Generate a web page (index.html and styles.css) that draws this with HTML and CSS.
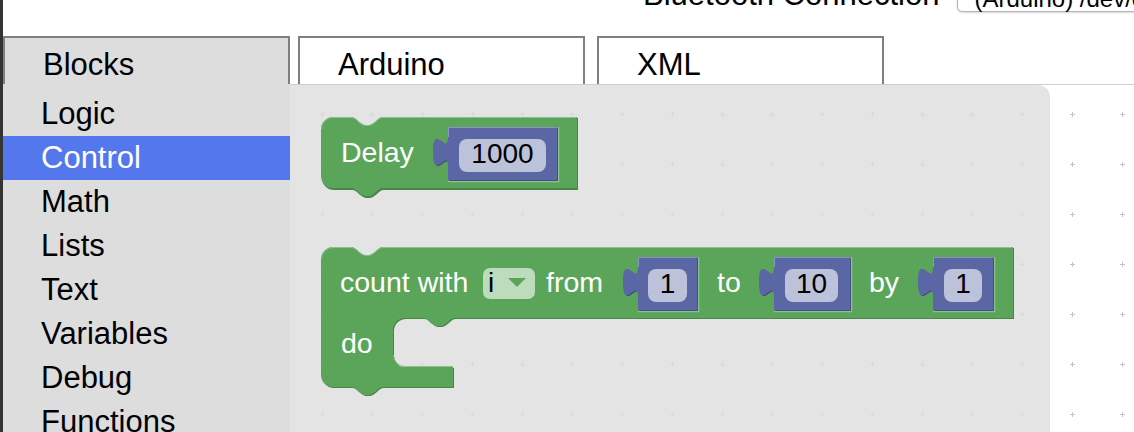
FILE: index.html
```html
<!DOCTYPE html>
<html>
<head>
<meta charset="utf-8">
<title>Blocks</title>
<link rel="stylesheet" href="styles.css">
</head>
<body>
<div class="app">
  <div class="edge"></div>
  <div class="main">
    <header class="topbar">
      <span class="bt-label">Bluetooth Connection</span>
      <div class="port-select">(Arduino) /dev/cu.usbmodem1411</div>
    </header>
    <nav class="tabs">
      <div class="tab tab-active">Blocks</div>
      <div class="tab tab-code">Arduino</div>
      <div class="tab">XML</div>
    </nav>
    <div class="editor">
      <ul class="toolbox">
        <li class="toolbox-item">Logic</li>
        <li class="toolbox-item selected">Control</li>
        <li class="toolbox-item">Math</li>
        <li class="toolbox-item">Lists</li>
        <li class="toolbox-item">Text</li>
        <li class="toolbox-item">Variables</li>
        <li class="toolbox-item">Debug</li>
        <li class="toolbox-item">Functions</li>
      </ul>
      <div class="workspace">
        <svg class="canvas" width="844" height="347" viewBox="0 0 844 347" xmlns="http://www.w3.org/2000/svg">
          <defs>
            <pattern id="grid" patternUnits="userSpaceOnUse" width="50" height="50" x="0" y="0">
              <rect x="20" y="14" width="5" height="1" fill="#c4c4c4"/>
              <rect x="22" y="12" width="1" height="5" fill="#c4c4c4"/>
            </pattern>
          </defs>
          <g transform="translate(-290 -85)">
            <rect x="290" y="85" width="844" height="347" fill="url(#grid)"/>
            <path class="flyout" d="M290,85 H1038 A12,12 0 0 1 1050,97 V432 H290 Z"/>

            <!-- Delay block -->
            <path class="g-dark" transform="translate(1 1)" d="M321,129 A12,12 0 0 1 333,117 H351 c3,0 5,2 7,4 l4,3 c2,1 3,1 5,1 c2,0 3,0 5,-1 l4,-3 c2,-2 4,-4 7,-4 H577 V189 H383 c-3,0 -5,2 -7,4 l-4,3 c-2,1 -3,1 -5,1 c-2,0 -3,0 -5,-1 l-4,-3 c-2,-2 -4,-4 -7,-4 H333 A12,12 0 0 1 321,177 Z"/>
            <path class="g-fill" d="M321,129 A12,12 0 0 1 333,117 H351 c3,0 5,2 7,4 l4,3 c2,1 3,1 5,1 c2,0 3,0 5,-1 l4,-3 c2,-2 4,-4 7,-4 H577 V188 H383 c-3,0 -5,2 -7,4 l-4,3 c-2,1 -3,1 -5,1 c-2,0 -3,0 -5,-1 l-4,-3 c-2,-2 -4,-4 -7,-4 H333 A12,12 0 0 1 321,176 Z"/>
            <path class="g-hi" d="M321.5,129 A11.5,11.5 0 0 1 333,117.5 H351 c3,0 5,2 7,4 l4,3 c2,1 3,1 5,1 c2,0 3,0 5,-1 l4,-3 c2,-2 4,-4 7,-4 H576"/>
            <text class="blk-label" x="341" y="162">Delay</text>

            <path class="sock-hi" d="M558.5,127 V181.5 H448"/>
            <path class="v-dark" transform="translate(1 1)" d="M448,127 H557 V180 H448 V167 C448,147 433,183 433,152 C433,121 448,157 448,137 Z"/>
            <path class="v-fill" d="M448,127 H557 V180 H448 V167 C448,147 433,183 433,152 C433,121 448,157 448,137 Z"/>
            <path class="v-hi" d="M448.5,137 V127.5 H556.5"/>
            <rect class="v-field" x="459" y="139" width="87" height="33" rx="8"/>
            <text class="fld-text" x="502.5" y="163">1000</text>

            <!-- count with block -->
            <path class="g-dark" transform="translate(1 1)" d="M321,259 A12,12 0 0 1 333,247 H351 c3,0 5,2 7,4 l4,3 c2,1 3,1 5,1 c2,0 3,0 5,-1 l4,-3 c2,-2 4,-4 7,-4 H1013 V318 H455 c-3,0 -5,2 -7,4 l-4,3 c-2,1 -3,1 -5,1 c-2,0 -3,0 -5,-1 l-4,-3 c-2,-2 -4,-4 -7,-4 H405 A12,12 0 0 0 393,330 V355 A12,12 0 0 0 405,367 H453 V387 H383 c-3,0 -5,2 -7,4 l-4,3 c-2,1 -3,1 -5,1 c-2,0 -3,0 -5,-1 l-4,-3 c-2,-2 -4,-4 -7,-4 H333 A12,12 0 0 1 321,375 Z"/>
            <path class="g-fill" d="M321,259 A12,12 0 0 1 333,247 H351 c3,0 5,2 7,4 l4,3 c2,1 3,1 5,1 c2,0 3,0 5,-1 l4,-3 c2,-2 4,-4 7,-4 H1013 V318 H455 c-3,0 -5,2 -7,4 l-4,3 c-2,1 -3,1 -5,1 c-2,0 -3,0 -5,-1 l-4,-3 c-2,-2 -4,-4 -7,-4 H405 A12,12 0 0 0 393,330 V355 A12,12 0 0 0 405,367 H453 V387 H383 c-3,0 -5,2 -7,4 l-4,3 c-2,1 -3,1 -5,1 c-2,0 -3,0 -5,-1 l-4,-3 c-2,-2 -4,-4 -7,-4 H333 A12,12 0 0 1 321,375 Z"/>
            <path class="g-hi" d="M321.5,259 A11.5,11.5 0 0 1 333,247.5 H351 c3,0 5,2 7,4 l4,3 c2,1 3,1 5,1 c2,0 3,0 5,-1 l4,-3 c2,-2 4,-4 7,-4 H1012"/>
            <path class="g-hi" d="M393.5,355 A11.5,11.5 0 0 0 405,366.5 H453"/>
            <text class="blk-label" x="340" y="292">count with</text>
            <rect class="g-field" x="483" y="268" width="52" height="31" rx="7"/>
            <text class="fld-text" x="491" y="292" text-anchor="start">i</text>
            <path class="dd-arrow" d="M508,278 H526 L517,287 Z"/>
            <text class="blk-label" x="546" y="292">from</text>

            <path class="sock-hi" d="M698.5,257 V311.5 H638"/>
            <path class="v-dark" transform="translate(1 1)" d="M638,257 H697 V310 H638 V297 C638,277 623,313 623,282 C623,251 638,287 638,267 Z"/>
            <path class="v-fill" d="M638,257 H697 V310 H638 V297 C638,277 623,313 623,282 C623,251 638,287 638,267 Z"/>
            <path class="v-hi" d="M638.5,267 V257.5 H696.5"/>
            <rect class="v-field" x="648" y="269" width="39" height="33" rx="8"/>
            <text class="fld-text" x="667.5" y="293">1</text>

            <text class="blk-label" x="717" y="292">to</text>

            <path class="sock-hi" d="M851.5,257 V311.5 H774"/>
            <path class="v-dark" transform="translate(1 1)" d="M774,257 H850 V310 H774 V297 C774,277 759,313 759,282 C759,251 774,287 774,267 Z"/>
            <path class="v-fill" d="M774,257 H850 V310 H774 V297 C774,277 759,313 759,282 C759,251 774,287 774,267 Z"/>
            <path class="v-hi" d="M774.5,267 V257.5 H849.5"/>
            <rect class="v-field" x="785" y="269" width="53" height="33" rx="8"/>
            <text class="fld-text" x="811.5" y="293">10</text>

            <text class="blk-label" x="869" y="292">by</text>

            <path class="sock-hi" d="M994.5,257 V311.5 H933"/>
            <path class="v-dark" transform="translate(1 1)" d="M933,257 H993 V310 H933 V297 C933,277 918,313 918,282 C918,251 933,287 933,267 Z"/>
            <path class="v-fill" d="M933,257 H993 V310 H933 V297 C933,277 918,313 918,282 C918,251 933,287 933,267 Z"/>
            <path class="v-hi" d="M933.5,267 V257.5 H992.5"/>
            <rect class="v-field" x="944" y="269" width="38" height="33" rx="8"/>
            <text class="fld-text" x="963" y="293">1</text>

            <text class="blk-label" x="341" y="353">do</text>
          </g>
        </svg>
      </div>
    </div>
  </div>
</div>
</body>
</html>
```
FILE: styles.css
```css
* {
  box-sizing: border-box;
}

html,
body {
  margin: 0;
  padding: 0;
}

body {
  width: 1134px;
  height: 432px;
  overflow: hidden;
  background: #ffffff;
  color: #000000;
  font-family: "Liberation Sans", Arial, Helvetica, sans-serif;
}

.app {
  display: flex;
  height: 432px;
}

.edge {
  flex: none;
  width: 3px;
  background: #343434;
}

.main {
  flex: 1;
  min-width: 0;
  display: flex;
  flex-direction: column;
}

/* top bar with the bluetooth port picker */
.topbar {
  flex: none;
  height: 36px;
  display: flex;
  align-items: flex-start;
  padding-left: 640px;
  white-space: nowrap;
}

.bt-label {
  flex: none;
  margin-top: -23px;
  font-size: 31px;
  line-height: 36px;
}

.port-select {
  flex: none;
  margin-top: -24px;
  margin-left: 18px;
  height: 36px;
  padding: 10px 40px 0 16px;
  font-size: 24px;
  line-height: 24px;
  background: #ffffff;
  border: 1px solid #b4b4b4;
  border-radius: 5px;
  box-shadow: 0 1px 2px rgba(0, 0, 0, 0.15);
}

/* tabs */
.tabs {
  flex: none;
  display: flex;
  height: 48px;
}

.tab {
  flex: none;
  width: 287px;
  height: 48px;
  margin-right: 8px;
  padding: 8px 0 0 38px;
  border: 2px solid #808080;
  border-bottom: 0;
  background: #ffffff;
  font-size: 31px;
  line-height: 38px;
}

.tab-active {
  background: #dddddd;
}

.tab-code {
  margin-right: 12px;
}

/* editor */
.editor {
  flex: 1;
  min-height: 0;
  display: flex;
}

.toolbox {
  flex: none;
  width: 287px;
  margin: 0;
  padding: 8px 0 0;
  list-style: none;
  background: #dddddd;
  overflow: hidden;
}

.toolbox-item {
  padding: 2px 0 2px 38px;
  font-size: 31px;
  line-height: 40px;
  white-space: nowrap;
}

.toolbox-item.selected {
  background: #5577ee;
  color: #ffffff;
}

.workspace {
  flex: 1;
  min-width: 0;
  border-top: 1px solid #cfcfcf;
  overflow: hidden;
  background: #ffffff;
}

.canvas {
  display: block;
}

.flyout {
  fill: #dddddd;
  fill-opacity: 0.8;
}

/* blocks */
.g-fill {
  fill: #5ba55b;
}

.g-dark {
  fill: #498449;
}

.g-hi {
  fill: none;
  stroke: #8cc08c;
  stroke-width: 1;
}

.g-field {
  fill: #bddbbd;
}

.dd-arrow {
  fill: #5ba55b;
}

.sock-hi {
  fill: none;
  stroke: #8cc08c;
  stroke-width: 1.5;
}

.v-fill {
  fill: #5b67a5;
}

.v-dark {
  fill: #454f80;
}

.v-hi {
  fill: none;
  stroke: #8c95c3;
  stroke-width: 1;
}

.v-field {
  fill: #bdc2db;
}

.blk-label {
  fill: #ffffff;
  font-family: "Liberation Sans", Arial, Helvetica, sans-serif;
  font-size: 28.5px;
}

.fld-text {
  fill: #000000;
  font-family: "Liberation Sans", Arial, Helvetica, sans-serif;
  font-size: 28px;
  text-anchor: middle;
}
```
